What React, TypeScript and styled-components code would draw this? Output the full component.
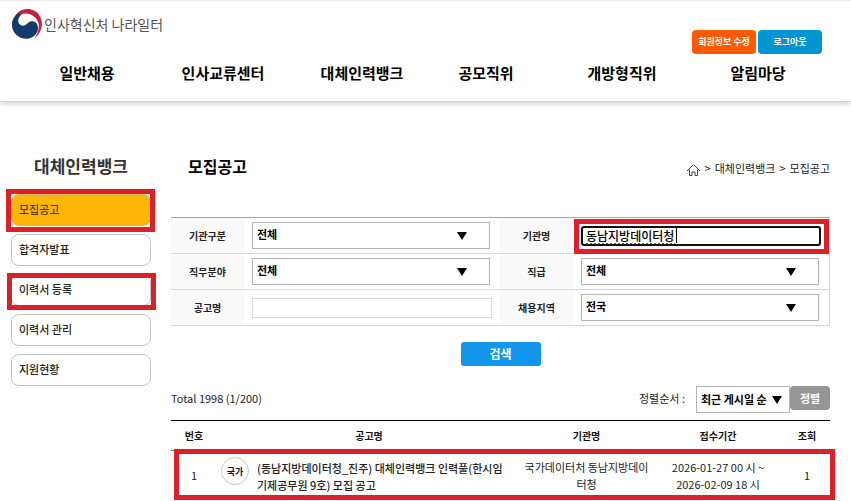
import React from "react";
import styled, { createGlobalStyle, css } from "styled-components";

const GlobalStyle = createGlobalStyle`
  * { box-sizing: border-box; }
  body {
    margin: 0;
    background: #fff;
    color: #222;
    overflow: hidden;
    font-family: "Noto Sans CJK KR", "Noto Sans", sans-serif;
    font-size: 11px;
    line-height: 17px;
  }
  button, input, select { font: inherit; color: inherit; }
  a { color: inherit; text-decoration: none; }
`;

const RED = "#dc2029";

/* Header */

const Header = styled.header`
  border-top: 1px solid #f0f0f0;
  border-bottom: 1px solid #d2d2d2;
  box-shadow: 0 2px 5px rgba(0, 0, 0, 0.18);
  height: 102px;
  display: flex;
  flex-direction: column;
`;

const HeaderTop = styled.div`
  display: flex;
  justify-content: space-between;
  align-items: flex-start;
  padding: 8px 29px 0 12px;
`;

const Brand = styled.a`
  display: flex;
  align-items: center;
  gap: 2px;
  height: 30px;
  font-size: 14px;
  color: #555;
`;

const UserButtons = styled.div`
  display: flex;
  gap: 2px;
  padding-top: 21px;
`;

const UserButton = styled.button<{ $tone: string }>`
  width: 64px;
  height: 24px;
  padding: 0 0 2px;
  border: 0;
  border-radius: 4px;
  background: ${(p) => p.$tone};
  color: #fff;
  font-size: 9px;
  font-weight: 700;
  white-space: nowrap;
`;

const Nav = styled.nav`
  display: grid;
  grid-template-columns: 136fr 136fr 142fr 106fr 166fr 106fr;
  padding: 0 40px 0 19px;
`;

const NavLink = styled.a`
  text-align: center;
  font-size: 15px;
  font-weight: 700;
  line-height: 22px;
  margin-top: 8px;
  color: #000;
  white-space: nowrap;
`;

/* Page */

const Page = styled.div`
  display: grid;
  grid-template-columns: 140px minmax(0, 1fr);
  gap: 20px;
  padding: 52px 21px 0 11px;
`;

const SideTitle = styled.h2`
  margin: 0 0 16px;
  text-align: center;
  font-size: 17px;
  font-weight: 700;
  line-height: 24px;
  color: #333;
`;

const SideList = styled.ul`
  list-style: none;
  margin: 0;
  padding: 0;
  display: flex;
  flex-direction: column;
  gap: 8px;
`;

const SideItem = styled.li`
  position: relative;
`;

const SideLink = styled.a<{ $active?: boolean }>`
  display: flex;
  align-items: center;
  height: 32px;
  padding: 0 7px 1px;
  border: 1px solid #c4c4c4;
  border-radius: 8px;
  font-size: 11px;
  font-weight: 500;
  ${(p) =>
    p.$active &&
    css`
      background: #ffb606;
      border-color: #d8b060;
      color: #4a3a10;
    `}
`;

const Frame = styled.span<{ $inset: string }>`
  position: absolute;
  inset: ${(p) => p.$inset};
  border: 5px solid ${RED};
  pointer-events: none;
`;

const TitleRow = styled.div`
  display: flex;
  justify-content: space-between;
  align-items: center;
  height: 24px;
  padding-left: 17px;
  margin-bottom: 39px;
`;

const PageTitle = styled.h1`
  margin: 0;
  font-size: 16px;
  font-weight: 700;
  line-height: 24px;
  color: #000;
`;

const Crumbs = styled.nav`
  display: flex;
  align-items: center;
  gap: 4px;
  padding-top: 5px;
  white-space: nowrap;
  svg { margin-top: 3px; }
`;

/* Search form */

const SearchGrid = styled.div`
  display: grid;
  grid-template-columns: 73px minmax(0, 1fr) 73px minmax(0, 1fr);
  border-top: 1px solid #a5a5a5;
  border-right: 1px solid #d8d8d8;
`;

const FieldLabel = styled.label`
  display: flex;
  align-items: center;
  justify-content: center;
  height: 36px;
  background: #f9f9f9;
  border-bottom: 1px solid #d8d8d8;
  font-size: 10px;
  font-weight: 700;
  color: #222;
`;

const FieldCell = styled.div`
  position: relative;
  display: flex;
  align-items: center;
  height: 36px;
  padding: 0 8px;
  border-bottom: 1px solid #d8d8d8;
`;

const SelectBox = styled.span<{ $compact?: boolean }>`
  position: relative;
  display: flex;
  ${(p) => (p.$compact ? "width: 94px;" : "flex: 1; margin-right: 2px;")}
  svg {
    position: absolute;
    right: ${(p) => (p.$compact ? "8px" : "23px")};
    top: 9px;
    pointer-events: none;
  }
`;

const Select = styled.select`
  appearance: none;
  width: 100%;
  height: 27px;
  padding: 0 4px 2px;
  border: 1px solid #b4b4b4;
  border-radius: 0;
  background: #fff;
  color: #000;
  font-size: 11px;
  font-weight: 700;
`;

const TextInput = styled.input<{ $focused?: boolean }>`
  width: 100%;
  height: 20px;
  padding: 0 4px;
  border: 1px solid #d5d5d5;
  background: #fff;
  ${(p) =>
    p.$focused &&
    css`
      padding: 0 3px;
      border: 2px solid #101010;
      border-radius: 3px;
      color: #000;
      font-size: 12px;
      font-weight: 500;
      outline: 0;
    `}
`;

const EditMarks = styled.svg`
  position: absolute;
  left: 13px;
  top: 10px;
  pointer-events: none;
`;

const SearchButton = styled.button`
  display: block;
  width: 80px;
  height: 24px;
  margin: 16px auto 20px;
  padding: 0 0 1px;
  border: 0;
  border-radius: 3px;
  background: #1296ec;
  color: #fff;
  font-size: 12px;
  font-weight: 700;
`;

/* Results */

const ListBar = styled.div`
  display: flex;
  justify-content: space-between;
  align-items: flex-start;
  height: 34px;
`;

const Total = styled.p`
  margin: 0;
  font-size: 11px;
  line-height: 24px;
`;

const Sort = styled.div`
  display: flex;
  align-items: flex-start;
  line-height: 24px;
  label { margin-right: 11px; }
`;

const SortButton = styled.button`
  width: 40px;
  height: 24px;
  padding: 0 0 1px;
  border: 0;
  border-radius: 4px;
  background: #969696;
  color: #fff;
  font-weight: 700;
`;

const TableWrap = styled.div`
  position: relative;
`;

const Table = styled.table`
  width: 100%;
  table-layout: fixed;
  border-collapse: collapse;
  border-top: 1px solid #000;
`;

const Th = styled.th<{ $width?: string }>`
  width: ${(p) => p.$width ?? "auto"};
  height: 30px;
  padding: 0;
  border-bottom: 1px solid #777;
  font-size: 10px;
  font-weight: 700;
  color: #111;
`;

const Td = styled.td`
  height: 50px;
  padding: 0;
  text-align: center;
  vertical-align: middle;
`;

const Notice = styled.a`
  display: flex;
  align-items: flex-start;
  gap: 8px;
  padding: 0 4px;
  text-align: left;
  font-weight: 500;
`;

const NoticeText = styled.span`
  flex: 1;
  padding-top: 3px;
  white-space: nowrap;
`;

const Badge = styled.span`
  display: grid;
  place-items: center;
  width: 28px;
  height: 28px;
  border: 1px solid #d0c8c0;
  border-radius: 50%;
  font-size: 9px;
  font-weight: 700;
  color: #111;
`;

function Arrow() {
  return (
    <svg width="10" height="9" viewBox="0 0 10 9" aria-hidden="true">
      <path d="M0 1H10L5 9Z" fill="#000" />
    </svg>
  );
}

function Logo() {
  return (
    <svg width="30" height="30" viewBox="0 0 90 90" aria-hidden="true">
      <path
        d="M12 17C26-1 50-4 68 6C95 21 99 64 67 89C83 66 86 42 70 26C52 9 28 11 14 24Z"
        fill="#c8203f"
      />
      <path
        d="M12 17C-6 36-4 64 16 80C36 96 66 90 76 68C83 50 72 36 59 37C47 38 45 50 33 50C19 49 15 35 22 24C24 20 27 17 31 15C24 13 17 13 12 17Z"
        fill="#123a6b"
      />
    </svg>
  );
}

function Home() {
  return (
    <svg width="15" height="14" viewBox="0 0 15 14" fill="none" stroke="#444" aria-hidden="true">
      <path d="M1 8L7.500 1.500L14 8M3.500 6.500V12.500H6V9H9V12.500H11.500V6.500" />
    </svg>
  );
}

type FieldProps = { id: string; label: string; value: string };

function SelectField({ id, label, value }: FieldProps) {
  return (
    <>
      <FieldLabel htmlFor={id}>{label}</FieldLabel>
      <FieldCell>
        <SelectBox>
          <Select id={id}>
            <option>{value}</option>
          </Select>
          <Arrow />
        </SelectBox>
      </FieldCell>
    </>
  );
}

const NAV = ["일반채용", "인사교류센터", "대체인력뱅크", "공모직위", "개방형직위", "알림마당"];

const SIDE = [
  { text: "모집공고", active: true, frame: "-5px -4px -6px -5px" },
  { text: "합격자발표" },
  { text: "이력서 등록", frame: "-1px -5px -4px -4px" },
  { text: "이력서 관리" },
  { text: "지원현황" },
];

export default function App() {
  return (
    <>
      <GlobalStyle />
      <Header>
        <HeaderTop>
          <Brand href="#">
            <Logo />
            <span>인사혁신처 나라일터</span>
          </Brand>
          <UserButtons>
            <UserButton $tone="#ff5a00">회원정보 수정</UserButton>
            <UserButton $tone="#0095d0">로그아웃</UserButton>
          </UserButtons>
        </HeaderTop>
        <Nav>
          {NAV.map((item) => (
            <NavLink href="#" key={item}>{item}</NavLink>
          ))}
        </Nav>
      </Header>
      <Page>
        <aside>
          <SideTitle>대체인력뱅크</SideTitle>
          <SideList>
            {SIDE.map((item) => (
              <SideItem key={item.text}>
                <SideLink href="#" $active={item.active}>{item.text}</SideLink>
                {item.frame && <Frame $inset={item.frame} />}
              </SideItem>
            ))}
          </SideList>
        </aside>
        <main>
          <TitleRow>
            <PageTitle>모집공고</PageTitle>
            <Crumbs>
              <Home />
              <span>&gt;</span>
              <a href="#">대체인력뱅크</a>
              <span>&gt;</span>
              <span>모집공고</span>
            </Crumbs>
          </TitleRow>
          <form onSubmit={(e) => e.preventDefault()}>
            <SearchGrid>
              <SelectField id="orgType" label="기관구분" value="전체" />
              <FieldLabel htmlFor="orgName">기관명</FieldLabel>
              <FieldCell>
                <TextInput id="orgName" $focused defaultValue="동남지방데이터청" spellCheck={false} />
                <EditMarks width="93" height="17" aria-hidden="true">
                  <path d="M0 15.500H89" stroke="#e03030" strokeDasharray="2 2" />
                  <path d="M90.500 0V15" stroke="#000" />
                </EditMarks>
                <Frame $inset="1px 0 -1px 1px" />
              </FieldCell>
              <SelectField id="jobField" label="직무분야" value="전체" />
              <SelectField id="grade" label="직급" value="전체" />
              <FieldLabel htmlFor="noticeName">공고명</FieldLabel>
              <FieldCell>
                <TextInput id="noticeName" />
              </FieldCell>
              <SelectField id="region" label="채용지역" value="전국" />
            </SearchGrid>
            <SearchButton type="submit">검색</SearchButton>
          </form>
          <ListBar>
            <Total>Total 1998 (1/200)</Total>
            <Sort>
              <label htmlFor="sort">정렬순서 :</label>
              <SelectBox $compact>
                <Select id="sort">
                  <option>최근 게시일 순</option>
                </Select>
                <Arrow />
              </SelectBox>
              <SortButton type="button">정렬</SortButton>
            </Sort>
          </ListBar>
          <TableWrap>
            <Table>
              <thead>
                <tr>
                  <Th $width="46px">번호</Th>
                  <Th>공고명</Th>
                  <Th $width="131px">기관명</Th>
                  <Th $width="132px">접수기간</Th>
                  <Th $width="46px">조회</Th>
                </tr>
              </thead>
              <tbody>
                <tr>
                  <Td>1</Td>
                  <Td>
                    <Notice href="#">
                      <Badge>국가</Badge>
                      <NoticeText>
                        (동남지방데이터청_진주) 대체인력뱅크 인력풀(한시임
                        <br />
                        기제공무원 9호) 모집 공고
                      </NoticeText>
                    </Notice>
                  </Td>
                  <Td>
                    국가데이터처 동남지방데이
                    <br />
                    터청
                  </Td>
                  <Td>
                    2026-01-27 00 시 ~<br />
                    2026-02-09 18 시
                  </Td>
                  <Td>1</Td>
                </tr>
              </tbody>
            </Table>
            <Frame $inset="29px -5px 1px 3px" />
          </TableWrap>
        </main>
      </Page>
    </>
  );
}
